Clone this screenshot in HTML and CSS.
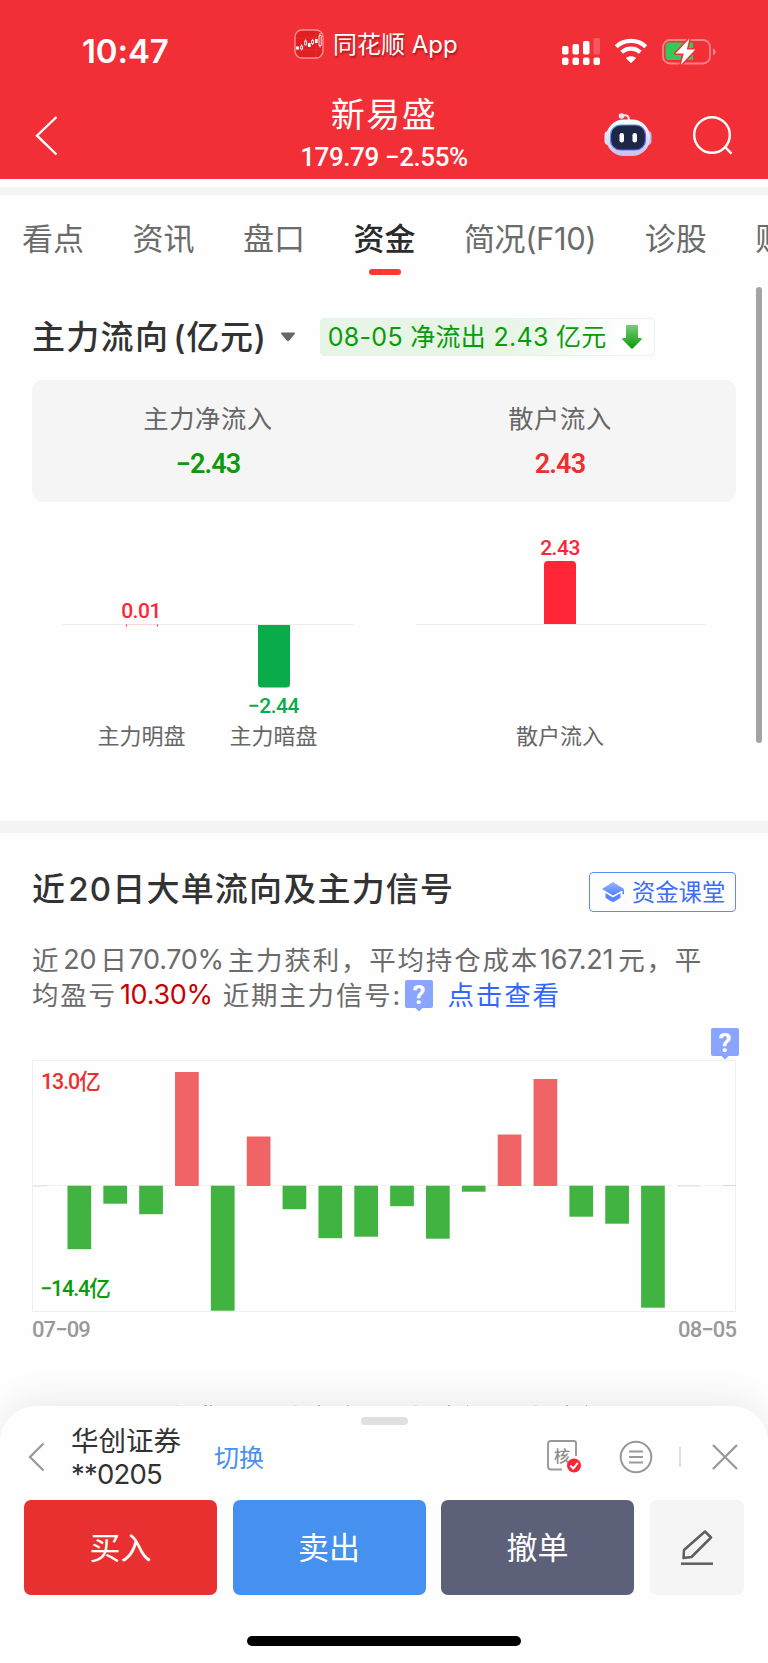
FILE: index.html
```html
<!DOCTYPE html>
<html lang="zh-CN">
<head>
  <meta charset="UTF-8" />
  <meta name="viewport" content="width=device-width, initial-scale=1.0"/>
  <title>新易盛 - 资金</title>
  <link rel="stylesheet" href="styles.css">
</head>
<body>
  <header class="header">
    <div class="status">
      <div class="time">10:47</div>
      <div class="app">
        <svg width="30" height="30" viewBox="0 0 30 30">
          <rect x="1" y="1" width="28" height="28" rx="7" fill="#e01f22" stroke="#f9918f" stroke-width="1.4"/>
          <path d="M22 2v26M2 9h26M2 21h26" stroke="#f03b3b" stroke-width=".6"/>
          <path d="M2 17.5h3v3H2zM14 14h2.6v4H14zM21 10h2.6v4H21z" fill="#fff"/>
          <path d="M6.600 17h2v3h-2zM10.600 12h2v4h-2zM17.600 11.500h2v3h-2zM25 6.500h2.200v10H25zM7.600 15.500V17M7.600 20v1.500M11.600 10.500V12M18.600 10v1.500M18.600 14.500V16M26 4v2.500M26 16.500v2" fill="none" stroke="#fff" stroke-width=".9"/>
        </svg>
        <span>同花顺 App</span>
      </div>
      <div class="signals">
        <svg width="39" height="28" viewBox="0 0 39 28" fill="#fff">
          <rect x="0" y="8" width="6.500" height="8.500" rx="1.800"/>
          <rect x="10.500" y="6" width="6.500" height="10.500" rx="1.800"/>
          <rect x="21" y="3" width="6.500" height="13.500" rx="1.800"/>
          <rect x="31.500" y="0" width="6.500" height="16.500" rx="1.800" opacity=".2"/>
          <rect x="0" y="19.500" width="6.500" height="7.500" rx="2"/>
          <rect x="10.500" y="19.500" width="6.500" height="7.500" rx="2"/>
          <rect x="21" y="19.500" width="6.500" height="7.500" rx="2"/>
          <rect x="31.500" y="19.500" width="6.500" height="7.500" rx="2"/>
        </svg>
        <svg class="wifi" width="34" height="26" viewBox="0 0 34 26">
          <path d="M2.200 8.700C10.500 1 23.500 1 31.800 8.700M7.700 14.300C13 9.300 21 9.300 26.300 14.300" fill="none" stroke="#fff" stroke-width="4.200"/>
          <path d="M17 25.200l-5.200-5.100c3-2.600 7.400-2.600 10.400 0z" fill="#fff"/>
        </svg>
        <svg class="battery" width="54" height="28" viewBox="0 0 54 28">
          <rect x="1" y="2" width="47" height="23.500" rx="7" fill="none" stroke="#f98286" stroke-width="1.800"/>
          <path d="M51 10.500c3.500 1.200 3.500 5.600 0 6.800z" fill="#f98286"/>
          <path d="M7 4.500h24V22H7a3.500 3.500 0 0 1-3.500-3.500V8A3.500 3.500 0 0 1 7 4.500z" fill="#35c759"/>
          <path d="M27.500.5L13.500 15.500h8.300l-3 11.500 14.500-15.500h-8.500z" fill="#fff" stroke="#f22f37" stroke-width="3" paint-order="stroke" stroke-linejoin="round"/>
        </svg>
      </div>
    </div>
    <div class="nav">
      <svg class="back" width="24" height="42" viewBox="0 0 24 42"><path d="M21.500 2L2 20.700 21.500 39.500" fill="none" stroke="#fff" stroke-width="2.400"/></svg>
      <div class="stock">
        <div class="name">新易盛</div>
        <div class="price">179.79 −2.55%</div>
      </div>
      <div class="nav-icons">
        <svg width="48" height="46" viewBox="0 0 48 46">
          <defs>
            <linearGradient id="shell" x1="0" y1="0" x2="0" y2="1"><stop offset="0" stop-color="#fff"/><stop offset="1" stop-color="#c3c3ee"/></linearGradient>
            <linearGradient id="rim" x1="0" y1="0" x2="1" y2="1"><stop offset="0" stop-color="#47c5e8"/><stop offset=".6" stop-color="#8050e8"/><stop offset="1" stop-color="#5374f0"/></linearGradient>
          </defs>
          <path d="M18 4c5-2 7 0 7 5" fill="none" stroke="#e9e6fa" stroke-width="2"/>
          <circle cx="17.500" cy="4" r="2.800" fill="#e3e4f7"/>
          <rect x="0.500" y="19" width="9" height="14" rx="4" fill="#e6e4f8"/>
          <rect x="38.500" y="19" width="9" height="14" rx="4" fill="#bcbbed"/>
          <rect x="2" y="7.500" width="44" height="36.500" rx="18" fill="url(#shell)"/>
          <rect x="6.500" y="13" width="35" height="25" rx="10" fill="#1d2848" stroke="url(#rim)" stroke-width="1.200"/>
          <rect x="15.500" y="21" width="4.500" height="9.500" rx="2.200" fill="#fff"/>
          <rect x="28.500" y="21" width="4.500" height="9.500" rx="2.200" fill="#fff"/>
        </svg>
        <svg width="42" height="42" viewBox="0 0 42 42" fill="none" stroke="#fff" stroke-width="2.400"><circle cx="20" cy="20" r="17.800"/><path d="M32.500 31.500l7 7.200"/></svg>
      </div>
    </div>
  </header>

  <nav class="tabs">
    <span>看点</span>
    <span>资讯</span>
    <span>盘口</span>
    <span class="active">资金</span>
    <span class="f10">简况(F10)</span>
    <span>诊股</span>
    <span>财务</span>
  </nav>

  <section class="flow">
    <div class="flow-head">
      <h2>主力流向<i>(亿元)</i></h2>
      <svg class="caret" width="16" height="10" viewBox="0 0 16 10"><path d="M1.500.5h13q1 .8 0 1.800L9 8.800q-1 .8-2 0L1.500 2.300q-1-1 0-1.800z" fill="#666"/></svg>
      <div class="badge">
        <span>08-05 净流出 2.43 亿元</span>
        <svg width="20" height="24" viewBox="0 0 20 24">
          <defs><linearGradient id="down" x1="0" y1="0" x2="0" y2="1"><stop offset="0" stop-color="#7bcb78"/><stop offset="1" stop-color="#089c08"/></linearGradient></defs>
          <path d="M5 0h10q1 0 1 1v12h3q1.500.2.500 1.400L11 23.300q-1 .9-2 0L.5 14.400Q-.5 13.200 1 13h3V1q0-1 1-1z" fill="url(#down)"/>
        </svg>
      </div>
    </div>

    <div class="summary">
      <div><p>主力净流入</p><b class="green">−2.43</b></div>
      <div><p>散户流入</p><b class="red">2.43</b></div>
    </div>

    <svg class="flow-chart" width="704" height="319" viewBox="32 502 704 319">
      <path d="M63 624.500h290M416 624.500h289" stroke="#ececec"/>
      <path d="M126.500 624.500h31" stroke="#fbd5d8"/>
      <path d="M126.500 624.500v2M157.500 624.500v2" stroke="#ff2436"/>
      <path d="M258 625h32v59q0 3.500-3.500 3.500h-25q-3.500 0-3.500-3.500z" fill="#09ab4b"/>
      <path d="M544 624v-59q0-4 4-4h24q4 0 4 4v59z" fill="#ff2436"/>
      <g class="bar-value">
        <text x="141" y="618" fill="#ff2436">0.01</text>
        <text x="273.500" y="713" fill="#09ab4b">−2.44</text>
        <text x="560" y="555" fill="#ff2436">2.43</text>
      </g>
      <g class="bar-name">
        <text x="141.500" y="743.500">主力明盘</text>
        <text x="273.500" y="743.500">主力暗盘</text>
        <text x="560" y="743.500">散户流入</text>
      </g>
    </svg>
  </section>

  <section class="signal">
    <div class="signal-head">
      <h2>近<em>20</em>日大单流向及主力信号</h2>
      <a class="lesson">
        <svg width="22" height="21" viewBox="0 0 22 21">
          <defs><linearGradient id="cap" x1="0" y1="0" x2="0" y2="1"><stop offset="0" stop-color="#9db6ff"/><stop offset="1" stop-color="#4c7dff"/></linearGradient></defs>
          <path d="M11 0l10 6.200q1 .7 1 2v4h-1.600V8.500L11 13.500 0 7z" fill="url(#cap)"/>
          <path d="M3.500 11l7.500 4.600 7.500-4.600v4.800q-3.500 2.700-7.500 4.400-4-1.700-7.500-4.400z" fill="#5c86ff"/>
        </svg>
        <span>资金课堂</span>
      </a>
    </div>

    <div class="desc">
      <p>近<em>20</em>日<em class="rate">70.70%</em>主力获利，平均持仓成本<em class="cost">167.21</em>元，平</p>
      <p>均盈亏<em class="loss">10.30%</em><s></s>近期主力信号<i>:</i><svg class="help" width="28" height="32" viewBox="0 0 28 32"><path d="M2 0h24q2 0 2 2v24q0 2-2 2h-8.500L14 31.500 10.500 28H2q-2 0-2-2V2q0-2 2-2z" fill="#8aa5ff"/><text x="14" y="23.500">?</text></svg><a>点击查看</a></p>
    </div>

    <div class="help-row">
      <svg class="help" width="28" height="32" viewBox="0 0 28 32"><path d="M2 0h24q2 0 2 2v24q0 2-2 2h-8.500L14 31.500 10.500 28H2q-2 0-2-2V2q0-2 2-2z" fill="#8aa5ff"/><text x="14" y="23.500">?</text></svg>
    </div>

    <svg class="day-chart" width="706" height="253" viewBox="32 1060 706 253">
      <rect x="32.500" y="1060.500" width="703" height="251" fill="none" stroke="#efefef"/>
      <path d="M33 1185.500h703" stroke="#f1f1f1" stroke-dasharray="22 3 41 5.700"/>
      <g id="bars"></g>
      <path d="M33 1186h14M677 1186h24" stroke="#cfeacf"/>
      <path d="M723 1185.500h13" stroke="#f8c9ca"/>
      <text x="41" y="1089" fill="#ee2f2f">13.0亿</text>
      <text x="40" y="1296" fill="#0a9b0a">−14.4亿</text>
    </svg>
    <div class="dates"><span>07−09</span><span>08−05</span></div>
  </section>

  <div class="scrollbar"></div>

  <div class="sheet">
    <svg class="peek" width="500" height="2" viewBox="150 0 500 2">
      <path d="M204 1.500h3M210 1.500h2M318 1.500h2M347 1.500h1.500M448 1.500h2M467 1.500h1M566 1.500h2M586 1.500h1" stroke="#b0b0b0"/>
      <path d="M176 1.500h3M294 1.500h3" stroke="#f8d5d5"/>
      <path d="M414 1.500h3M534 1.500h3" stroke="#cfe9cf"/>
    </svg>
    <div class="handle"></div>
    <div class="account">
      <svg class="prev" width="17" height="30" viewBox="0 0 17 30"><path d="M15.500 1.500L2 15l13.500 13.500" fill="none" stroke="#999" stroke-width="2.300"/></svg>
      <div class="broker">华创证券<br><span>**0205</span></div>
      <a class="switch">切换</a>
      <svg class="check" width="36" height="34" viewBox="0 0 36 34">
        <path d="M16 29.500H5q-3 0-3-3V4q0-3 3-3h23q2 0 2 2v13" fill="none" stroke="#999" stroke-width="1.900"/>
        <text x="16" y="21.500">核</text>
        <circle cx="28" cy="25.500" r="7" fill="#ff2436"/>
        <path d="M24.300 25.500l3 3 4.500-5.700" fill="none" stroke="#fff" stroke-width="2"/>
      </svg>
      <svg class="menu" width="34" height="34" viewBox="0 0 34 34" fill="none" stroke="#999" stroke-width="2"><circle cx="17" cy="17" r="15.300"/><path d="M10 11.500h14M10 17h14M10 22.500h14"/></svg>
      <div class="line"></div>
      <svg width="26" height="26" viewBox="0 0 26 26"><path d="M1 1l24 24M25 1L1 25" stroke="#999" stroke-width="2.300"/></svg>
    </div>
    <div class="actions">
      <button class="btn buy">买入</button>
      <button class="btn sell">卖出</button>
      <button class="btn cancel">撤单</button>
      <button class="btn edit">
        <svg width="34" height="37" viewBox="0 0 34 37" fill="none" stroke="#5e5e5e" stroke-width="2.500"><path d="M25 2.500l6 6L11.500 28l-8 1 .5-8z" stroke-linejoin="round"/><path d="M1 34.700h32"/></svg>
      </button>
    </div>
    <div class="home"></div>
  </div>

  <script>
    // 每日大单净流向，单位为图上像素，正数向上
    const days = [0, -63.5, -18, -28.5, 114, -125, 49.5, -23.5, -52.5, -51, -20.5, -53, -6, 51.5, 107, -31, -38, -122];
    const bars = document.getElementById('bars');
    days.forEach((v, i) => {
      if (!v) return;
      const r = document.createElementNS('http://www.w3.org/2000/svg', 'rect');
      r.setAttribute('x', 31.65 + i * 35.85);
      r.setAttribute('y', v > 0 ? 1186 - v : 1185.7);
      r.setAttribute('width', 23.7);
      r.setAttribute('height', Math.abs(v));
      r.setAttribute('fill', v > 0 ? '#f06466' : '#41b341');
      bars.appendChild(r);
    });
  </script>
</body>
</html>
```
FILE: styles.css
```css
* { box-sizing: border-box; }
body {
  position: relative;
  width: 768px;
  height: 1663px;
  margin: 0;
  overflow: hidden;
  background: #fefefe;
  color: #323232;
  font-family: Inter, 'Noto Sans CJK SC', sans-serif;
}
h2, p { margin: 0; }
i, em { font-style: normal; }
svg { display: block; flex: none; }
.green { color: #0a9b0a; }
.red { color: #ee2f2f; }

.header {
  height: 179px;
  background: #f22f37;
  color: #fff;
}
.status {
  display: grid;
  grid-template-columns: 294px 1fr 206px;
  height: 90px;
}
.time {
  padding: 31px 0 0 82px;
  font-size: 33px;
  font-weight: 600;
  line-height: 40px;
  letter-spacing: -0.1px;
}
.app {
  display: flex;
  gap: 9px;
  padding-top: 29px;
  font-size: 24px;
  line-height: 32px;
  text-shadow: 1px 2px 2px rgba(90,0,0,0.5);
  white-space: nowrap;
}
.signals {
  display: flex;
  padding-top: 38px;
}
.wifi { margin-left: 13px; }
.battery { margin-left: 14px; }
.nav {
  display: grid;
  grid-template-columns: 204px 360px 204px;
}
.back { margin: 25px 0 0 35px; }
.stock { text-align: center; }
.name {
  height: 50px;
  font-size: 34px;
  line-height: 50px;
  letter-spacing: 1.5px;
}
.price {
  font-family: Roboto, sans-serif;
  font-size: 26px;
  font-weight: 500;
  line-height: 34px;
  letter-spacing: -0.4px;
}
.nav-icons {
  display: flex;
  gap: 40px;
  padding: 22px 0 0 40px;
}
.nav-icons svg + svg { margin-top: 3px; }

.tabs {
  display: flex;
  gap: 48.500px;
  height: 101px;
  padding: 20px 0 0 22px;
  border-top: 8px solid #f4f4f4;
  margin-top: 8px;
  color: #6b6b6b;
  font-size: 31px;
  line-height: 48px;
  white-space: nowrap;
}
.tabs .active {
  color: #2b2b2b;
  font-weight: 500;
}
.tabs .active::after {
  content: '';
  display: block;
  width: 32px;
  height: 6px;
  margin: 6px auto 0;
  border-radius: 3px;
  background: #ff3930;
}
.tabs .f10 { letter-spacing: -0.400px; }

.flow {
  height: 533px;
  padding: 30px 32px 0;
}
.flow-head {
  display: flex;
  align-items: center;
  height: 38px;
}
h2 {
  font-size: 33px;
  font-weight: 500;
  line-height: 44px;
  letter-spacing: 1.300px;
  white-space: nowrap;
}
h2 i {
  margin-left: 4px;
  letter-spacing: 0.800px;
}
.caret { margin: 0 24px 0 13px; }
.badge {
  display: flex;
  align-items: center;
  width: 335px;
  height: 38px;
  padding-left: 7px;
  border: 1px solid #e6f5e6;
  border-radius: 4px;
  background: linear-gradient(100deg, #e6f5e6 55%, #fefefe 90%);
  color: #0a9b0a;
  font-size: 25px;
  letter-spacing: 0.300px;
  white-space: nowrap;
}
.badge span {
  width: 294px;
  padding-bottom: 4px;
}
.summary {
  display: grid;
  grid-template-columns: 1fr 1fr;
  height: 122px;
  margin-top: 24px;
  padding-top: 20px;
  border-radius: 11px;
  background: #f5f5f5;
  text-align: center;
}
.summary p {
  color: #666;
  font-size: 25.300px;
  line-height: 38px;
  letter-spacing: 0.600px;
}
.summary b {
  display: block;
  margin-top: 7px;
  font-family: Roboto, sans-serif;
  font-size: 27px;
  font-weight: 600;
  line-height: 38px;
  letter-spacing: -0.900px;
}
.bar-value {
  font-family: Roboto, sans-serif;
  font-size: 21px;
  font-weight: 500;
  letter-spacing: -0.500px;
  text-anchor: middle;
}
.bar-name {
  fill: #666;
  font-size: 22px;
  text-anchor: middle;
}

.signal {
  border-top: 12px solid #f4f4f4;
  padding: 39px 32px 0;
}
.signal-head {
  display: flex;
  justify-content: space-between;
  height: 68px;
}
.signal-head h2 {
  line-height: 34px;
  letter-spacing: 1.200px;
}
.signal-head em { margin: 0 0 0 2px; }
.lesson {
  display: flex;
  align-items: center;
  gap: 8px;
  width: 147px;
  height: 40px;
  padding-left: 12px;
  border: 1.500px solid #6188f8;
  border-radius: 4px;
  color: #3d6dfb;
  font-size: 23.300px;
  white-space: nowrap;
}
.lesson span { padding-bottom: 2px; }
.desc {
  height: 88px;
  color: #6b6b6b;
  font-size: 26.500px;
  letter-spacing: 1.800px;
  white-space: nowrap;
}
.desc p {
  display: flex;
  height: 35px;
  line-height: 40px;
}
.desc em {
  margin: 0 4px 0 3px;
  font-size: 27px;
  letter-spacing: -0.300px;
}
.desc .rate { margin-left: 0; }
.desc .cost { margin: 0 5px 0 1px; }
.desc .loss { color: #c90000; }
.desc s { width: 6px; }
.desc i { width: 12px; }
.desc a {
  margin-left: 15px;
  color: #3366ff;
}
.desc .help { margin-top: 5px; }
.help text {
  fill: #fff;
  font-family: Roboto, sans-serif;
  font-size: 26px;
  font-weight: 700;
  letter-spacing: 0;
  text-anchor: middle;
}
.help-row {
  display: flex;
  justify-content: flex-end;
  height: 32px;
  margin-right: -3px;
}
.day-chart text {
  font-family: Roboto, 'Noto Sans CJK SC', sans-serif;
  font-size: 21.500px;
  font-weight: 500;
  letter-spacing: -1.100px;
}
.dates {
  display: flex;
  justify-content: space-between;
  color: #999;
  font-family: Roboto, sans-serif;
  font-size: 22px;
  font-weight: 500;
  line-height: 33px;
  letter-spacing: -0.900px;
}

.scrollbar {
  position: absolute;
  top: 287px;
  right: 6px;
  width: 6px;
  height: 456px;
  border-radius: 3px;
  background: #a4a4a4;
}

.sheet {
  position: absolute;
  top: 1406px;
  left: 0;
  width: 768px;
  height: 257px;
  border-radius: 36px 36px 0 0;
  background: #fefefe;
  box-shadow: 0 -6px 36px rgba(0,0,0,0.08);
}
.peek {
  position: absolute;
  top: -2px;
  left: 150px;
}
.handle {
  width: 47px;
  height: 8px;
  margin: 11px auto 0;
  border-radius: 4px;
  background: #e0e0e0;
}
.account {
  display: flex;
  align-items: center;
  height: 64px;
  padding: 0 30px 0 28px;
}
.broker {
  width: 142px;
  margin-left: 26px;
  padding-top: 1px;
  font-size: 27.500px;
  line-height: 33px;
}
.broker span { letter-spacing: -0.800px; }
.switch {
  margin: 0 auto 0 1px;
  padding-bottom: 2px;
  color: #4690ef;
  font-size: 25px;
}
.check text {
  fill: #8c8c8c;
  font-size: 16px;
  font-weight: 500;
  text-anchor: middle;
}
.menu { margin: 0 26px 0 37px; }
.line {
  width: 2px;
  height: 20px;
  margin-right: 31px;
  background: #ddd;
}
.actions {
  display: grid;
  grid-template-columns: 193px 193px 193px 94px;
  gap: 15.500px;
  margin: 11px 24px 0;
}
.btn {
  display: flex;
  align-items: center;
  justify-content: center;
  height: 95px;
  padding: 0 0 4px;
  border: none;
  border-radius: 7px;
  color: #fff;
  font-family: inherit;
  font-size: 31px;
}
.buy { background: #e83030; }
.sell { background: #4690ef; }
.cancel { background: #5c6079; }
.edit {
  padding: 0;
  background: #f5f5f5;
}
.home {
  width: 274px;
  height: 10px;
  margin: 41px auto 0;
  border-radius: 5px;
  background: #000;
}
```
